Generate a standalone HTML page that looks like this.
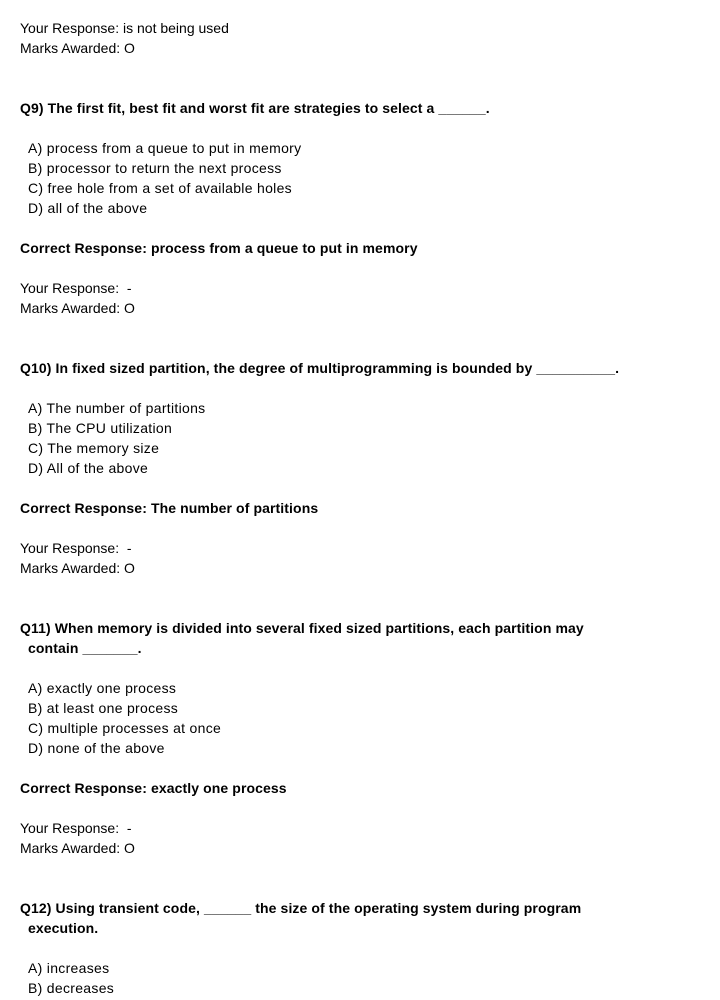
<!DOCTYPE html>
<html><head><style>
body{margin:0;width:720px;height:1000px;background:#fff;position:relative;overflow:hidden;font-family:"Liberation Sans",sans-serif;font-size:14px;color:#000}
div{position:absolute;left:20px;height:20px;line-height:20px;white-space:nowrap}
.o{letter-spacing:0.3px}
.b{font-weight:bold;letter-spacing:0.1px}
.o{left:28px}
.y{font-size:14px;letter-spacing:0}
</style></head><body>
<div class="y" style="top:18px">Your Response: is not being used</div>
<div class="y" style="top:38px">Marks Awarded: O</div>
<div class="b" style="top:98px">Q9) The first fit, best fit and worst fit are strategies to select a ______.</div>
<div class="o" style="top:138px">A) process from a queue to put in memory</div>
<div class="o" style="top:158px">B) processor to return the next process</div>
<div class="o" style="top:178px">C) free hole from a set of available holes</div>
<div class="o" style="top:198px">D) all of the above</div>
<div class="b" style="top:238px">Correct Response: process from a queue to put in memory</div>
<div class="y" style="top:278px">Your Response:&nbsp; -</div>
<div class="y" style="top:298px">Marks Awarded: O</div>
<div class="b" style="top:358px">Q10) In fixed sized partition, the degree of multiprogramming is bounded by __________.</div>
<div class="o" style="top:398px">A) The number of partitions</div>
<div class="o" style="top:418px">B) The CPU utilization</div>
<div class="o" style="top:438px">C) The memory size</div>
<div class="o" style="top:458px">D) All of the above</div>
<div class="b" style="top:498px">Correct Response: The number of partitions</div>
<div class="y" style="top:538px">Your Response:&nbsp; -</div>
<div class="y" style="top:558px">Marks Awarded: O</div>
<div class="b" style="top:618px">Q11) When memory is divided into several fixed sized partitions, each partition may</div>
<div class="b o" style="top:638px">contain _______.</div>
<div class="o" style="top:678px">A) exactly one process</div>
<div class="o" style="top:698px">B) at least one process</div>
<div class="o" style="top:718px">C) multiple processes at once</div>
<div class="o" style="top:738px">D) none of the above</div>
<div class="b" style="top:778px">Correct Response: exactly one process</div>
<div class="y" style="top:818px">Your Response:&nbsp; -</div>
<div class="y" style="top:838px">Marks Awarded: O</div>
<div class="b" style="top:898px">Q12) Using transient code, ______ the size of the operating system during program</div>
<div class="b o" style="top:918px">execution.</div>
<div class="o" style="top:958px">A) increases</div>
<div class="o" style="top:978px">B) decreases</div>
</body></html>
